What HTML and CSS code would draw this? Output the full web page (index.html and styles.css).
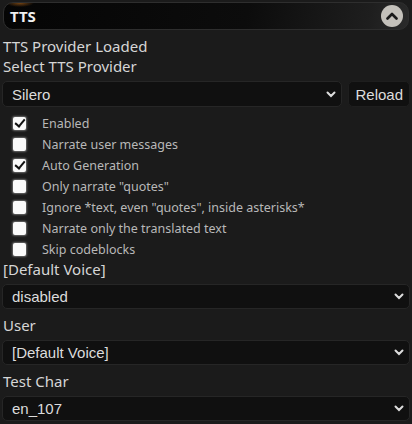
FILE: index.html
```html
<!DOCTYPE html>
<html>
<head>
<meta charset="utf-8">
<link rel="stylesheet" href="styles.css">
</head>
<body>
<div class="panel">
  <div class="header">
    <span class="title">TTS</span>
    <span class="toggle">
      <svg width="12" height="8" viewBox="0 0 12 8"><path d="M1.5 6.5 L6 2 L10.5 6.5" fill="none" stroke="#1a1a1a" stroke-width="2.6" stroke-linecap="round" stroke-linejoin="round"/></svg>
    </span>
  </div>
  <div class="label top-label first">TTS Provider Loaded</div>
  <div class="label top-label">Select TTS Provider</div>
  <div class="provider-row">
    <div class="select grow tall"><span>Silero</span><svg class="chev" width="10" height="7" viewBox="0 0 10 7"><path d="M1.5 1.5 L5 5 L8.5 1.5" fill="none" stroke="#ddd" stroke-width="2" stroke-linecap="round"/></svg></div>
    <div class="button">Reload</div>
  </div>
  <div class="checks">
    <div class="check"><span class="box on"></span><span>Enabled</span></div>
    <div class="check"><span class="box"></span><span>Narrate user messages</span></div>
    <div class="check"><span class="box on"></span><span>Auto Generation</span></div>
    <div class="check"><span class="box"></span><span>Only narrate "quotes"</span></div>
    <div class="check"><span class="box"></span><span>Ignore *text, even "quotes", inside asterisks*</span></div>
    <div class="check"><span class="box"></span><span>Narrate only the translated text</span></div>
    <div class="check"><span class="box"></span><span>Skip codeblocks</span></div>
  </div>
  <div class="label voice-label">[Default Voice]</div>
  <div class="select"><span>disabled</span><svg class="chev" width="10" height="7" viewBox="0 0 10 7"><path d="M1.5 1.5 L5 5 L8.5 1.5" fill="none" stroke="#ddd" stroke-width="2" stroke-linecap="round"/></svg></div>
  <div class="label voice-label">User</div>
  <div class="select"><span>[Default Voice]</span><svg class="chev" width="10" height="7" viewBox="0 0 10 7"><path d="M1.5 1.5 L5 5 L8.5 1.5" fill="none" stroke="#ddd" stroke-width="2" stroke-linecap="round"/></svg></div>
  <div class="label voice-label">Test Char</div>
  <div class="select"><span>en_107</span><svg class="chev" width="10" height="7" viewBox="0 0 10 7"><path d="M1.5 1.5 L5 5 L8.5 1.5" fill="none" stroke="#ddd" stroke-width="2" stroke-linecap="round"/></svg></div>
</div>
</body>
</html>
```
FILE: styles.css
```css
html, body {
  margin: 0;
  padding: 0;
  background: #1b1b1b;
}
body {
  font-family: "Noto Sans", sans-serif;
  color: #d6d6d6;
  width: 412px;
  height: 424px;
  overflow: hidden;
}
.panel {
  padding: 2px 2px 0 2px;
  display: flex;
  flex-direction: column;
}
.header {
  margin: 0 1px;
  height: 28px;
  box-sizing: border-box;
  border: 1px solid #2e2e2e;
  border-radius: 10px;
  background:
    radial-gradient(ellipse 14px 4px at 16px 0px, rgba(210,120,30,0.55), transparent),
    radial-gradient(ellipse 14px 3px at 16px 28px, rgba(180,100,30,0.35), transparent),
    linear-gradient(100deg, #050505 0%, #0c0c0c 60%, #1e1e1e 90%, #2a2a2a 100%);
  display: flex;
  align-items: center;
  justify-content: space-between;
  padding: 0 5px 0 6px;
}
.title {
  font-weight: 700;
  font-size: 15px;
  color: #f0f0f0;
}
.toggle {
  width: 22px;
  height: 22px;
  border-radius: 50%;
  background: #c4c1bb;
  display: flex;
  align-items: center;
  justify-content: center;
}
.label {
  font-size: 15px;
  line-height: 19px;
  padding-left: 1px;
}
.top-label {
  line-height: 20px;
}
.top-label.first {
  margin-top: 6px;
}
.provider-row {
  display: flex;
  gap: 6px;
  margin-top: 5px;
}
.grow { flex: 1; }
.select {
  height: 25px;
  box-sizing: border-box;
  background: #101010;
  border: 1px solid #262626;
  border-radius: 5px;
  display: flex;
  align-items: center;
  justify-content: space-between;
  padding: 0 5px 0 9px;
  font-family: "Liberation Sans", Arial, sans-serif;
  font-size: 15px;
  color: #dcdcdc;
}
.select.tall {
  height: 26px;
}
.button {
  height: 26px;
  box-sizing: border-box;
  background: #101010;
  border: 1px solid #1e1e1e;
  border-radius: 5px;
  display: flex;
  align-items: center;
  padding: 0 6px;
  font-family: "Liberation Sans", Arial, sans-serif;
  font-size: 15px;
  color: #dcdcdc;
}
.checks {
  display: flex;
  flex-direction: column;
  margin-top: 6px;
}
.check {
  display: flex;
  align-items: center;
  height: 21px;
  font-size: 12.5px;
  color: #b8b8b8;
}
.box {
  width: 13px;
  height: 13px;
  margin-left: 11px;
  margin-right: 16px;
  background: #fafafa;
  border-radius: 2px;
  box-shadow: 0 0 2px 1px rgba(255,255,255,0.35);
  position: relative;
}
.box.on::after {
  content: "";
  position: absolute;
  left: 4px;
  top: 0px;
  width: 4px;
  height: 8px;
  border: solid #111;
  border-width: 0 2.5px 2.5px 0;
  transform: rotate(40deg);
}
.voice-label {
  margin-bottom: 5px;
}
.checks + .voice-label { margin-top: 0; }
.select + .voice-label { margin-top: 7px; }
```
